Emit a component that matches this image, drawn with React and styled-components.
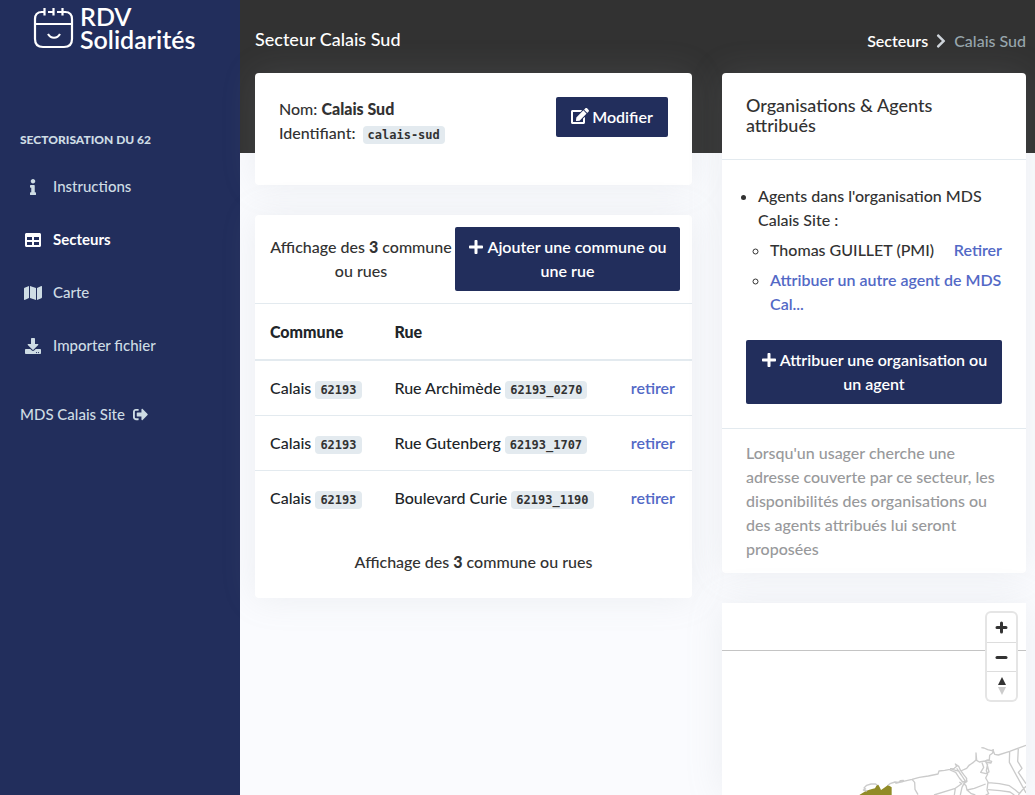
import React from "react";
import styled, { createGlobalStyle } from "styled-components";
import {
  FaInfo, FaTable, FaMap, FaDownload, FaSignOutAlt, FaEdit, FaPlus, FaChevronRight,
} from "react-icons/fa";

const navy = "#222e5c";
const ink = "#323232";
const line = "#e3eaef";
const blue = "#5369c6";

const GlobalStyle = createGlobalStyle`
  *, *::before, *::after { box-sizing: border-box; }
  body {
    margin: 0;
    background: #fafbfe;
    color: ${ink};
    font: 500 16px/24px Lato, "Liberation Sans", sans-serif;
  }
  h1, h2, p, ul { margin: 0; padding: 0; }
  a { color: ${blue}; text-decoration: none; }
  strong { font-weight: 900; }
`;

const Shell = styled.div`
  display: flex;
  min-height: 100vh;
`;

const Sidebar = styled.aside`
  flex: 0 0 240px;
  background: ${navy};
  color: #cedce4;
  font-size: 15px;
`;

const Logo = styled.a`
  display: flex;
  gap: 6px;
  height: 70px;
  padding: 5px 0 0 33px;
  color: #fff;
  font-size: 25px;
  line-height: 23px;
  font-weight: 600;
  svg { margin-top: 2px; }
`;

const LogoText = styled.span`
  display: flex;
  flex-direction: column;
`;

const MenuTitle = styled.h2`
  padding: 58px 20px 0;
  font-size: 12px;
  line-height: 24px;
  font-weight: 900;
  text-transform: uppercase;
`;

const Menu = styled.nav`
  padding-top: 7px;
`;

const MenuLink = styled.a`
  display: flex;
  align-items: center;
  gap: 7px;
  height: 53px;
  padding: 0 20px;
  color: ${(p) => (p.$active ? "#fff" : "#cedce4")};
  font-weight: ${(p) => (p.$active ? 700 : 500)};
  svg { width: 26px; height: 16px; margin-top: 3px; }
`;

const SiteLink = styled.a`
  display: flex;
  align-items: center;
  gap: 8px;
  padding: 31px 20px 0;
  color: #cedce4;
`;

const Main = styled.main`
  flex: 1;
  min-width: 0;
  display: flex;
  flex-direction: column;
  padding: 0 9px 0 15px;
  background: linear-gradient(${ink} 153px, transparent 153px);
`;

const PageHeader = styled.header`
  display: flex;
  justify-content: space-between;
  align-items: center;
  height: 73px;
  padding-top: 4px;
  color: #fff;
`;

const PageTitle = styled.h1`
  font-size: 18px;
  line-height: 24px;
  font-weight: 500;
`;

const Breadcrumb = styled.nav`
  display: flex;
  align-items: center;
  gap: 5px;
  padding-top: 4px;
  color: #98a6ad;
  a { color: #fff; font-weight: 600; }
  svg { color: #ced4da; }
`;

const Columns = styled.div`
  flex: 1;
  display: grid;
  grid-template-columns: minmax(0, 437fr) minmax(0, 304fr);
  gap: 30px;
`;

const Column = styled.div`
  display: flex;
  flex-direction: column;
  gap: 30px;
`;

const Card = styled.section`
  background: #fff;
  border-radius: 4px;
  box-shadow: 0 0 35px rgba(154, 161, 171, 0.15);
`;

const SectorInfo = styled(Card)`
  display: flex;
  justify-content: space-between;
  align-items: flex-start;
  min-height: 112px;
  padding: 24px;
`;

const Button = styled.button`
  width: ${(p) => (p.$block ? "100%" : "auto")};
  min-width: 112px;
  padding: 8px 12px;
  background: ${navy};
  color: #fff;
  border: 0;
  border-radius: 2px;
  font: inherit;
  font-weight: 600;
  text-align: center;
  cursor: pointer;
  svg { margin-right: 3px; vertical-align: -2px; }
`;

const Code = styled.code`
  display: inline-block;
  padding: 0 5px;
  margin-left: ${(p) => (p.$spaced ? "3px" : "0")};
  border-radius: 4px;
  background: ${line};
  color: ${ink};
  font: 700 12px/18px "DejaVu Sans Mono", "Liberation Mono", monospace;
`;

const ListHeader = styled.div`
  display: grid;
  grid-template-columns: 188fr 225fr;
  align-items: center;
  padding: 12px;
  text-align: center;
`;

const Table = styled.table`
  width: 100%;
  border-collapse: separate;
  border-spacing: 0;
  color: #212529;
  th, td {
    padding: 15px;
    height: 55px;
    border-top: 1px solid ${line};
    text-align: left;
    white-space: nowrap;
  }
  th { height: 57px; padding-top: 16px; font-weight: 900; border-bottom: 1px solid ${line}; }
  td:last-child { text-align: right; padding-right: 17px; }
`;

const ListFooter = styled.p`
  padding: 25px 12px 24px;
  text-align: center;
`;

const CardHeader = styled.header`
  padding: 22px 24px 24px;
  border-bottom: 1px solid ${line};
`;

const CardTitle = styled.h2`
  font-size: 18px;
  line-height: 20px;
  font-weight: 500;
`;

const CardBody = styled.div`
  padding: 24px;
`;

const OrgList = styled.ul`
  padding-left: 12px;
  margin-bottom: 24px;
  list-style: disc;
  ul { padding-left: 12px; list-style: circle; }
  ul li { margin-top: 6px; }
  a { font-weight: 600; }
`;

const AgentRow = styled.div`
  display: flex;
  justify-content: space-between;
`;

const CardFooter = styled.footer`
  padding: 12px 24px;
  border-top: 1px solid ${line};
  color: #98999b;
`;

const RowLink = styled.a`
  font-weight: 600;
`;

const MapCard = styled(Card)`
  position: relative;
  flex: 1;
  min-height: 192px;
  border-radius: 0;
  overflow: hidden;
`;

const MapDrawing = styled.svg`
  display: block;
  width: 100%;
`;

const MapControls = styled.div`
  position: absolute;
  top: 10px;
  right: 10px;
  display: flex;
  flex-direction: column;
  border-radius: 4px;
  background: #fff;
  box-shadow: 0 0 0 2px #e5e5e5;
`;

const MapButton = styled.button`
  display: grid;
  place-items: center;
  width: 29px;
  height: 29px;
  padding: 0;
  border: 0;
  background: transparent;
  & + & { border-top: 1px solid #ddd; }
`;

const menu = [
  { label: "Instructions", Icon: FaInfo },
  { label: "Secteurs", Icon: FaTable, active: true },
  { label: "Carte", Icon: FaMap },
  { label: "Importer fichier", Icon: FaDownload },
];

const streets = [
  { name: "Rue Archimède", code: "62193_0270" },
  { name: "Rue Gutenberg", code: "62193_1707" },
  { name: "Boulevard Curie", code: "62193_1190" },
];

const Count = () => (
  <>Affichage des <strong>3</strong> commune ou rues</>
);

export default function App() {
  return (
    <Shell>
      <GlobalStyle />
      <Sidebar>
        <Logo href="#">
          <svg width="41" height="42" viewBox="0 0 41 42" fill="none" stroke="#fff" strokeWidth="2.200" strokeLinecap="butt" aria-hidden="true">
            <path d="M9 5C4 5 2 8 2 12V32C2 37 5 40 10 40H31C36 40 39 37 39 32V12C39 8 37 5 32 5M2 17H39" />
            <path d="M8 5H12M15 5H21M24 5H33M11.500 1V8.500M20.500 1V8.500M29.500 1V8.500" />
            <path d="M15 27C18 32 24 32 27 27" />
          </svg>
          <LogoText><span>RDV</span><span>Solidarités</span></LogoText>
        </Logo>
        <MenuTitle>Sectorisation du 62</MenuTitle>
        <Menu>
          {menu.map(({ label, Icon, active }) => (
            <MenuLink key={label} href="#" $active={active}><Icon />{label}</MenuLink>
          ))}
        </Menu>
        <SiteLink href="#">MDS Calais Site <FaSignOutAlt /></SiteLink>
      </Sidebar>
      <Main>
        <PageHeader>
          <PageTitle>Secteur Calais Sud</PageTitle>
          <Breadcrumb>
            <a href="#">Secteurs</a>
            <FaChevronRight />
            <span>Calais Sud</span>
          </Breadcrumb>
        </PageHeader>
        <Columns>
          <Column>
            <SectorInfo>
              <div>
                <p>Nom: <strong>Calais Sud</strong></p>
                <p>Identifiant: <Code $spaced>calais-sud</Code></p>
              </div>
              <Button><FaEdit size={18} />Modifier</Button>
            </SectorInfo>
            <Card>
              <ListHeader>
                <p><Count /></p>
                <Button><FaPlus />Ajouter une commune ou une rue</Button>
              </ListHeader>
              <Table>
                <thead>
                  <tr><th>Commune</th><th>Rue</th><th aria-label="Actions" /></tr>
                </thead>
                <tbody>
                  {streets.map((s) => (
                    <tr key={s.code}>
                      <td>Calais <Code>62193</Code></td>
                      <td>{s.name} <Code>{s.code}</Code></td>
                      <td><RowLink href="#">retirer</RowLink></td>
                    </tr>
                  ))}
                </tbody>
              </Table>
              <ListFooter><Count /></ListFooter>
            </Card>
          </Column>
          <Column>
            <Card>
              <CardHeader>
                <CardTitle>Organisations &amp; Agents attribués</CardTitle>
              </CardHeader>
              <CardBody>
                <OrgList>
                  <li>
                    Agents dans l'organisation MDS Calais Site :
                    <ul>
                      <li>
                        <AgentRow><span>Thomas GUILLET (PMI)</span><a href="#">Retirer</a></AgentRow>
                      </li>
                      <li><a href="#">Attribuer un autre agent de MDS Cal...</a></li>
                    </ul>
                  </li>
                </OrgList>
                <Button $block><FaPlus />Attribuer une organisation ou un agent</Button>
              </CardBody>
              <CardFooter>
                Lorsqu'un usager cherche une adresse couverte par ce secteur, les disponibilités des
                organisations ou des agents attribués lui seront proposées
              </CardFooter>
            </Card>
            <MapCard>
              <MapDrawing viewBox="6 39 912 576" fill="none" stroke="#cbcbcb" strokeWidth="4" strokeLinejoin="round" aria-hidden="true">
                <path d="M6 181.500H918" stroke="#c4c4c4" strokeWidth="3" />
                <path d="M418 615L436 604L448 599L456 597L465 595L470 586L475 584L480 593L483 600L495 592L504 585L509 588L515 592V615Z" fill="#918b27" stroke="none" />
                <path d="M441 603L430 600L437 597L432 594L440 586L453 582L467 582L472 586M504 586L510 581L525 576L536 577L541 572L550 571L549 575L526 580M550 574L576 568L598 562L625 558L654 552L657 543L674 541L690 538L703 535L710 529L706 522L716 529L721 540L731 554L740 565L739 573L728 576L718 564L707 547L690 540M690 536L707 541L719 544M710 535L724 555L735 572M576 568L584 577L585 598L594 614M722 543L740 535L748 525L758 519L768 510V489L770 511L778 516L795 513L801 510L815 514L813 519L796 516M744 529L764 514M784 473L792 474L803 479L815 482L820 479L818 489L809 496L808 509L795 513L801 522L807 546L798 551L782 547L791 532L786 518M803 521L799 542L803 552L797 564L804 576L801 600L806 611L797 615M820 483L824 493L835 495L869 484L918 466M869 484L868 517L918 609M895 475L893 514L906 535L895 547L918 581M805 578L838 581L868 587L886 600L899 611M804 599L840 602L870 606L883 615M895 615L907 600L918 589M739 565L741 574L732 580L726 592L721 615M718 576L725 581L706 595L703 615M706 595L642 615M732 581L738 587L741 600L763 595L797 582M741 600L754 611L766 615" />
              </MapDrawing>
              <MapControls>
                <MapButton aria-label="Zoomer">
                  <svg width="13" height="13" viewBox="0 0 13 13" stroke="#333" strokeWidth="3" strokeLinecap="round"><path d="M2 6.500H11M6.500 2V11" /></svg>
                </MapButton>
                <MapButton aria-label="Dézoomer">
                  <svg width="13" height="13" viewBox="0 0 13 13" stroke="#333" strokeWidth="3" strokeLinecap="round"><path d="M2 6.500H11" /></svg>
                </MapButton>
                <MapButton aria-label="Réinitialiser le nord">
                  <svg width="8" height="18" viewBox="0 0 8 18"><path d="M0 8L4 0L8 8Z" fill="#333" /><path d="M0 10H8L4 18Z" fill="#ccc" /></svg>
                </MapButton>
              </MapControls>
            </MapCard>
          </Column>
        </Columns>
      </Main>
    </Shell>
  );
}
